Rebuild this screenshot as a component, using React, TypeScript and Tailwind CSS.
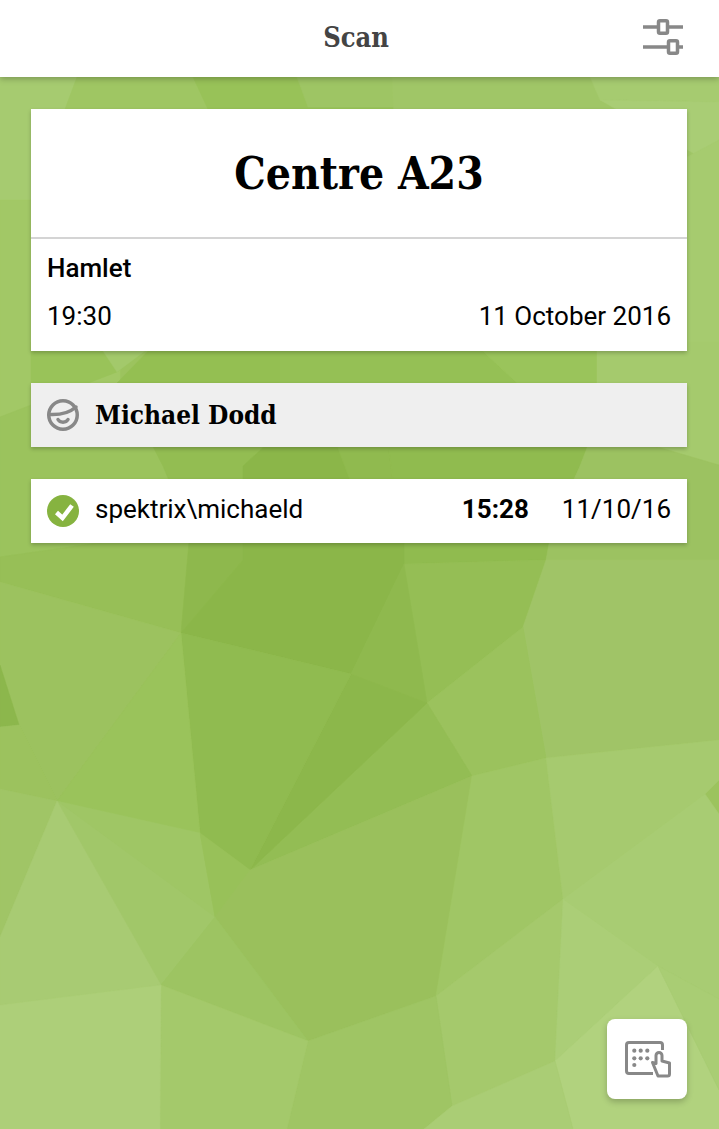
import React from "react";

const polys: [string, string][] = [
  // top band
  ["0,77 77,77 77,107 31,200 0,200", "#a6cb70"],
  ["77,77 193,77 250,107 290,200 31,200", "#9fc663"],
  ["193,77 297,77 308,107 398,107 400,200 250,200", "#98c258"],
  ["297,77 392,77 398,107 308,107", "#9ec564"],
  ["392,77 590,77 600,100 700,157 600,200 398,200", "#a0c667"],
  ["590,77 719,77 719,102 600,100", "#a6cb70"],
  ["600,100 719,102 719,140 700,157", "#a9cd75"],
  ["687,157 719,140 719,470 687,440", "#a6cb6f"],
  // behind the cards, down the left
  ["0,200 120,200 120,417 0,417", "#a2c866"],
  ["0,417 31,405 147,435 163,466 190,530 0,557", "#9bc35d"],
  ["31,342 157,342 117,372 31,405", "#99c359"],
  ["97,342 157,342 117,372", "#a3c96b"],
  ["157,342 280,342 280,383 117,383", "#94bf52"],
  ["147,435 277,435 243,466 243,560 190,530 163,466", "#93bd52"],
  ["277,435 333,435 353,466 380,560 243,560 243,466", "#8bb649"],
  ["333,435 387,435 404,564 380,560", "#90ba4f"],
  ["280,342 473,342 517,383 280,383", "#95c055"],
  ["473,342 597,342 597,383 517,383", "#9ac45b"],
  ["597,342 719,342 719,470 617,435 597,383", "#a5ca6d"],
  ["387,435 592,435 580,466 552,527 546,560 404,564", "#90bb4f"],
  ["592,435 617,435 719,465 719,560 546,560 552,527 580,466", "#9cc261"],
  // lower half
  ["0,557 190,530 181,633 0,582", "#97bf57"],
  ["190,530 243,530 243,560 181,633", "#8eb84d"],
  ["243,530 404,530 404,564 351,674 181,633 243,560", "#8bb649"],
  ["404,564 546,560 523,627 427,703", "#95be55"],
  ["404,564 427,703 351,674", "#8fb94e"],
  ["546,560 719,560 719,740 546,758 523,627", "#a0c467"],
  ["523,627 546,758 472,776 427,703", "#9bc25d"],
  ["427,703 472,776 250,870", "#93bd54"],
  ["351,674 427,703 250,870", "#8cb74b"],
  ["181,633 351,674 250,870 200,833", "#90bb50"],
  ["0,582 181,633 57,801 19,725 0,665", "#9cc25f"],
  ["0,665 19,725 0,727", "#8cb74c"],
  ["181,633 200,833 57,801", "#9ac35b"],
  ["0,727 19,725 57,801 0,789", "#9cc25e"],
  ["0,789 57,801 0,937", "#a0c566"],
  ["57,801 200,833 215,917", "#9fc665"],
  ["57,801 215,917 161,985", "#a1c769"],
  ["57,801 161,985 0,1005 0,937", "#a8cb73"],
  ["200,833 250,870 215,917", "#98c159"],
  ["250,870 472,776 436,996 308,1041 215,917", "#9ac05c"],
  ["215,917 308,1041 161,985", "#9dc462"],
  ["472,776 546,758 563,899 436,996", "#a0c665"],
  ["546,758 719,740 719,780 705,794 563,899", "#a6ca6f"],
  ["563,899 705,794 719,814 719,999 658,966", "#a8cc73"],
  ["436,996 563,899 555,1061 452,1106", "#a5c96c"],
  ["563,899 658,966 555,1061", "#abce77"],
  ["658,966 719,1090 719,1129 573,1129 555,1061", "#b1d27e"],
  ["658,966 719,999 719,1090", "#a9cd74"],
  ["308,1041 436,996 452,1106 424,1129 287,1129", "#9fc564"],
  ["452,1106 555,1061 573,1129 424,1129", "#aacd75"],
  ["161,985 308,1041 287,1129 160,1129", "#a4c96b"],
  ["0,1005 161,985 160,1129 0,1129", "#adcf79"],
];

const serif = "font-['DejaVu_Serif_Condensed','DejaVu_Serif',serif]";

const App = () => {
  return (
    <div className="relative h-[1129px] w-[719px] overflow-hidden bg-[#9cc35e] font-['Roboto',sans-serif] text-black">
      {/* low poly backdrop */}
      <svg className="absolute inset-0" width="719" height="1129" viewBox="0 0 719 1129" aria-hidden="true">
        {polys.map(([points, fill]) => (
          <polygon key={points} points={points} fill={fill} stroke={fill} strokeWidth="0.5" />
        ))}
      </svg>

      <div className="relative flex h-full flex-col">
        <header className="flex h-[77px] shrink-0 items-center justify-center bg-white pr-[7px] shadow-[0_2px_6px_rgba(0,0,0,0.25)]">
          <h1 className={`${serif} text-[27px] font-bold text-[#444444]`}>Scan</h1>
          <button className="absolute right-[36px] top-[19px]">
            <svg width="40" height="36" viewBox="0 0 40 36" fill="none" stroke="#888888" strokeWidth="3.5" className="block">
              <path d="M0 8H14M26 8H40" />
              <rect x="15.5" y="1.75" width="9" height="12.5" rx="1.5" />
              <path d="M0 28H24M36 28H40" />
              <rect x="25.5" y="21.75" width="9" height="12.5" rx="1.5" />
            </svg>
          </button>
        </header>

        <main className="flex flex-col gap-8 pl-[31px] pr-[32px] pt-8">
          <section className="bg-white shadow-[0_2px_4px_rgba(0,0,0,0.22)]">
            <div className="flex h-[130px] items-center justify-center border-b-2 border-[#d4d4d4] pt-[2px]">
              <h2 className={`${serif} text-[44px] font-bold`}>Centre A23</h2>
            </div>
            <div className="px-4 pb-[19px] pt-[13px] text-[26px]">
              <div className="font-medium leading-8">Hamlet</div>
              <div className="mt-4 flex justify-between leading-8">
                <span>19:30</span>
                <span>11 October 2016</span>
              </div>
            </div>
          </section>

          <section className="flex h-16 items-center gap-4 bg-[#efefef] px-4 shadow-[0_2px_4px_rgba(0,0,0,0.22)]">
            <svg width="32" height="32" viewBox="0 0 32 32" fill="none" stroke="#888888" strokeWidth="3.5" strokeLinecap="round">
              <circle cx="16" cy="16" r="14.25" />
              <path d="M2 15.5C10 16 21 15 29 8" />
              <path d="M11 20.5C13 24 19 24 21 20.5" />
            </svg>
            <span className={`${serif} text-[26px] font-bold`}>Michael Dodd</span>
          </section>

          <section className="flex h-16 items-center bg-white px-4 text-[26px] shadow-[0_2px_4px_rgba(0,0,0,0.22)]">
            <svg width="32" height="32" viewBox="0 0 32 32" fill="none">
              <circle cx="16" cy="16" r="16" fill="#86b340" />
              <path d="M9.5 17.5L15.5 23L25 10.5" stroke="white" strokeWidth="4.5" />
            </svg>
            <div className="ml-4 flex flex-1 pb-1">
              <span>spektrix\michaeld</span>
              <span className="ml-auto font-bold">15:28</span>
              <span className="ml-[33px]">11/10/16</span>
            </div>
          </section>
        </main>

        <button className="absolute left-[607px] top-[1019px] flex h-20 w-20 items-center justify-center rounded-lg bg-white shadow-[0_3px_6px_rgba(0,0,0,0.22)]">
          <svg width="50" height="40" viewBox="622 1039 50 40" fill="none" stroke="#888888" strokeWidth="3" strokeLinejoin="round">
            <path d="M653 1073.5H629a2.5 2.5 0 0 1-2.5-2.5V1045a2.5 2.5 0 0 1 2.5-2.5h31a2.5 2.5 0 0 1 2.5 2.5v5" />
            <g fill="#888888" stroke="none">
              <circle cx="634.3" cy="1050.7" r="2.1" />
              <circle cx="640.7" cy="1050.7" r="2.1" />
              <circle cx="647.3" cy="1050.7" r="2.1" />
              <circle cx="634.3" cy="1058.3" r="2.1" />
              <circle cx="640.7" cy="1058.3" r="2.1" />
              <circle cx="647.3" cy="1058.3" r="2.1" />
              <circle cx="634.3" cy="1065" r="2.1" />
            </g>
            <path d="M656 1055.5a3 3 0 0 1 6 0V1061l7.5 2v11a2 2 0 0 1-2 2H658l-5.5-13.5 3.5 1z" fill="white" />
          </svg>
        </button>
      </div>
    </div>
  );
};

export default App;
